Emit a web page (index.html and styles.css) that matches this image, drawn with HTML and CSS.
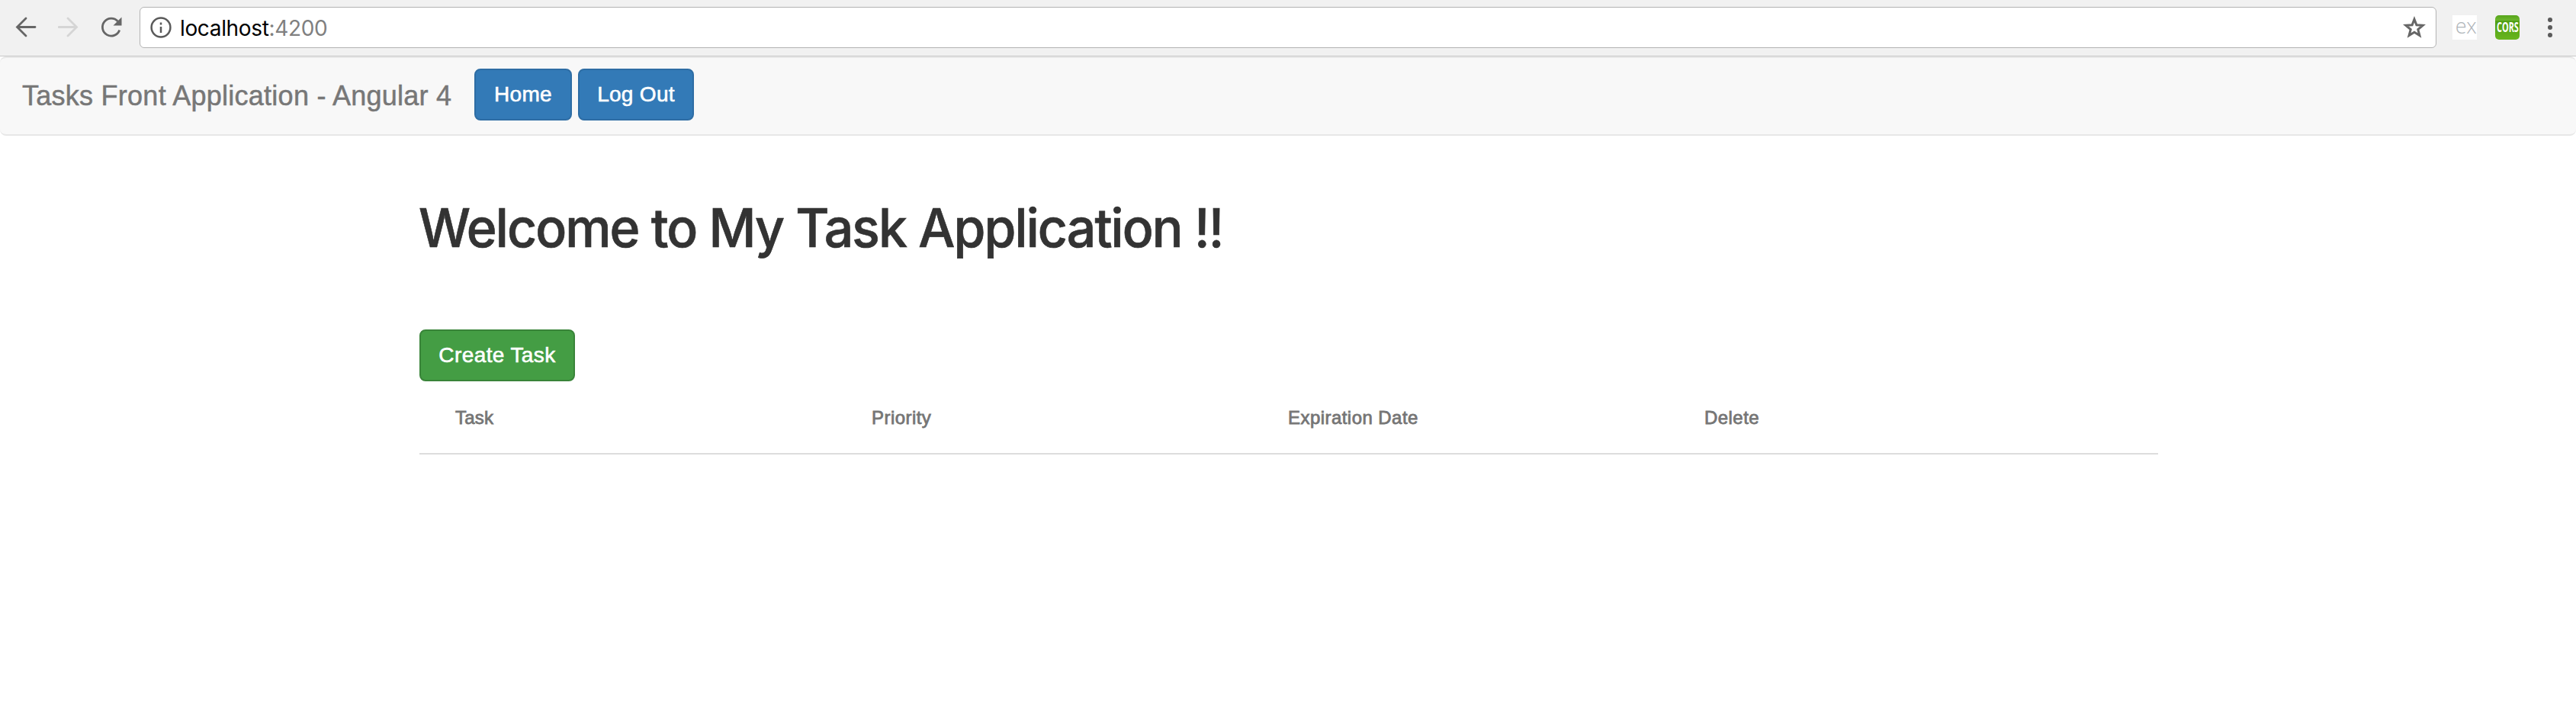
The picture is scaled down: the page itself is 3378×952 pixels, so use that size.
FILE: index.html
```html
<!DOCTYPE html>
<html lang="en">
<head>
<meta charset="utf-8">
<title>Tasks Front Application</title>
<link rel="stylesheet" href="styles.css">
</head>
<body>
<header class="toolbar">
  <svg class="icon back" viewBox="0 0 28 28"><path d="M26 13.5H3M14 2 2.5 13.5 14 25"/></svg>
  <svg class="icon forward" viewBox="0 0 28 28"><path d="M1 13.5h23M13 2l11.5 11.5L13 25"/></svg>
  <svg class="icon reload" viewBox="0 0 28 28"><path d="M22.5 6A11.5 11.5 0 1 0 24.7 17.5"/><path class="tip" d="M27.5.5v11h-11z"/></svg>
  <div class="address">
    <svg class="icon info" viewBox="0 0 28 28"><circle cx="14" cy="14" r="12.4"/><path d="M14 13v8M14 7.5v3.1"/></svg>
    <span class="url">localhost<span class="port">:4200</span></span>
    <svg class="icon star" viewBox="0 0 30 30"><path d="m15 4.200 2.900 7.500 8.300.6-6.400 5.300 2.100 7.900L15 21.200l-6.900 4.300 2.100-7.900-6.400-5.300 8.300-.6z"/></svg>
  </div>
  <span class="ext express">ex</span>
  <span class="ext cors"><span class="cors-label">CORS</span></span>
  <svg class="menu" viewBox="0 0 6 26"><circle cx="3" cy="3" r="3"/><circle cx="3" cy="13" r="3"/><circle cx="3" cy="23" r="3"/></svg>
</header>
<nav class="navbar">
  <a class="brand">Tasks Front Application - Angular 4</a>
  <button class="btn primary home">Home</button>
  <button class="btn primary logout">Log Out</button>
</nav>
<main class="container">
  <h1 class="title">Welcome to My Task Application !!</h1>
  <button class="btn success">Create Task</button>
  <div class="table-head">
    <span class="short">Task</span><span>Priority</span><span>Expiration Date</span><span>Delete</span>
  </div>
</main>
</body>
</html>
```
FILE: styles.css
```css
* { box-sizing: border-box; }
body { margin: 0; background: #fff; font-family: "Liberation Sans", Arial, sans-serif; color: #333; }

.toolbar { display: flex; align-items: center; height: 74px; padding: 0 31px 2px 20px; background: #f1f1f1; border-bottom: 1px solid #c8c8c8; }
.icon { width: 28px; height: 28px; flex: none; fill: none; stroke: #666; stroke-width: 2.8; }
.back { stroke-linecap: round; }
.forward { margin-left: 28px; stroke: #d5d5d5; stroke-linecap: round; }
.reload { margin-left: 28px; }
.reload .tip { fill: #666; stroke: none; }
.address { display: flex; align-items: center; flex: 1; height: 54px; margin-left: 23px; padding: 0 13px; background: #fff; border: 1px solid #b3b3b3; border-radius: 6px; }
.info { stroke: #5a5a5a; stroke-width: 2.5; }
.url { flex: 1; margin-left: 11px; font: 400 28px/52px Inter, sans-serif; letter-spacing: -.35px; color: #000; padding-top: 2px; }
.port { color: #808080; }
.star { width: 30px; height: 30px; stroke-width: 3; }

.ext { width: 32px; height: 32px; flex: none; text-align: center; }
.express { margin-left: 21px; background: #fff; color: #b0b5b9; font: 300 27px/28px "Open Sans", sans-serif; letter-spacing: -.5px; padding-left: 3px; }
.cors { display: flex; justify-content: center; margin-left: 24px; border-radius: 5px; background: linear-gradient(#57a51b 0, #6cb52d 20%, #4f9f12 24%, #68b51f 100%); }
.cors-label { color: #fff; font: 700 17px/32px "Open Sans", sans-serif; transform: scaleX(.64); }
.menu { width: 6px; height: 26px; flex: none; margin: 0 0 0 37px; fill: #5a5a5a; }

.navbar { display: flex; align-items: flex-start; height: 104px; padding: 14px 29px; background: #f8f8f8; border: solid #e7e7e7; border-width: 2px 0; border-radius: 8px; }
.brand { width: 593px; flex: none; font-size: 36px; line-height: 71px; letter-spacing: .26px; color: #777; white-space: nowrap; -webkit-text-stroke: .5px #777; }
.btn { display: block; height: 68px; padding: 0; border: 2px solid; border-radius: 8px; font: 400 28px/64px "Liberation Sans", Arial, sans-serif; color: #fff; white-space: nowrap; -webkit-text-stroke: .6px #fff; }
.primary { background: #337ab7; border-color: #2e6da4; }
.home { width: 128px; letter-spacing: .3px; }
.logout { width: 152px; margin-left: 8px; letter-spacing: .3px; }
.success { width: 204px; background: #449d44; border-color: #398439; letter-spacing: .4px; }

.container { width: 2280px; margin: 0 auto 0 550px; }
.title { margin: 0 0 0 -1px; padding-top: 78px; height: 254px; font: 500 70.5px/86px Inter, sans-serif; letter-spacing: -2px; white-space: nowrap; transform: scaleX(.963); transform-origin: left; -webkit-text-stroke: .7px #333; }
.table-head { display: grid; grid-template-columns: repeat(4, 546px); height: 96px; padding-left: 47px; border-bottom: 2px solid #ddd; font-size: 24px; line-height: 95px; letter-spacing: .45px; color: #757575; -webkit-text-stroke: .8px #757575; }
.short { letter-spacing: .2px; }
```
